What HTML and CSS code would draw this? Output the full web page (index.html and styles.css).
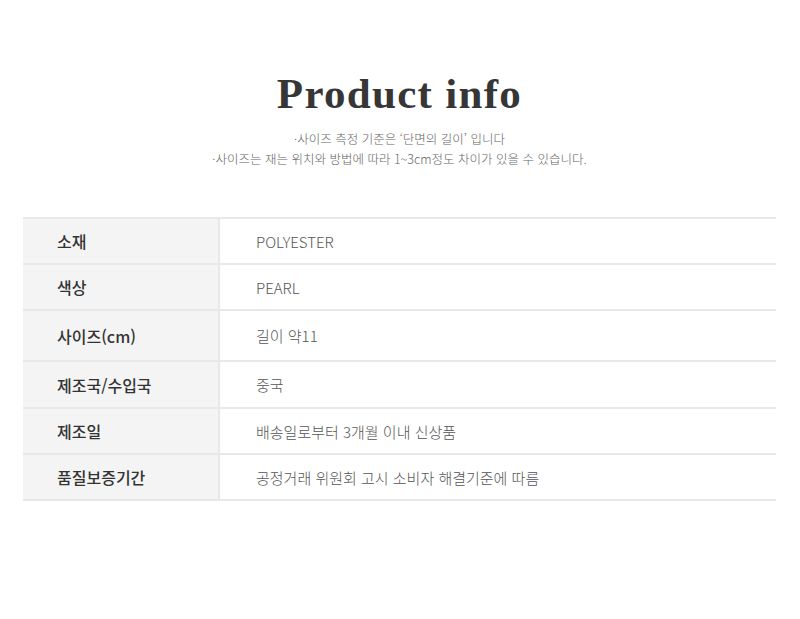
FILE: index.html
```html
<!DOCTYPE html>
<html lang="ko">
<head>
<meta charset="utf-8">
<title>Product info</title>
<link rel="stylesheet" href="styles.css">
</head>
<body>
<div class="page">
  <h1 class="title">Product info</h1>
  <div class="notes">
    <p>·사이즈 측정 기준은 ‘단면의 길이’ 입니다</p>
    <p>·사이즈는 재는 위치와 방법에 따라 1~3cm정도 차이가 있을 수 있습니다.</p>
  </div>
  <div class="table">
    <div class="row r1"><div class="label">소재</div><div class="value">POLYESTER</div></div>
    <div class="row r2"><div class="label">색상</div><div class="value">PEARL</div></div>
    <div class="row r3"><div class="label">사이즈(cm)</div><div class="value">길이 약11</div></div>
    <div class="row r4"><div class="label">제조국/수입국</div><div class="value">중국</div></div>
    <div class="row r5"><div class="label">제조일</div><div class="value">배송일로부터 3개월 이내 신상품</div></div>
    <div class="row r6"><div class="label">품질보증기간</div><div class="value">공정거래 위원회 고시 소비자 해결기준에 따름</div></div>
  </div>
</div>
</body>
</html>
```

FILE: styles.css
```css
* { box-sizing: border-box; }
html, body { margin: 0; padding: 0; background: #fff; }
body { font-family: "Noto Sans CJK KR", "Noto Sans", sans-serif; color: #333; }
.page { padding: 64px 24px 0 23px; }
.title {
  margin: 0;
  text-align: center;
  font-family: "Liberation Serif", serif;
  font-weight: bold;
  font-size: 43px;
  line-height: 60px;
  letter-spacing: 1.3px;
  color: #363636;
}
.notes { margin-top: 5px; text-align: center; font-size: 12.5px; line-height: 20px; color: #666; font-weight: 300; }
.notes p { margin: 0; }
.table { margin-top: 48px; border-top: 2px solid #e8e8e8; }
.row { display: flex; border-bottom: 2px solid #e8e8e8; height: 46px; }
.r3 { height: 51px; }
.r4 { height: 47px; }
.label {
  width: 197px;
  flex: none;
  background: #f4f4f4;
  border-right: 2px solid #e8e8e8;
  display: flex; align-items: center;
  padding-left: 34px;
  font-size: 16px;
  font-weight: 500;
  color: #333;
}
.value {
  flex: 1;
  display: flex; align-items: center;
  padding-left: 36px;
  font-size: 15px;
  font-weight: 300;
  color: #555;
}
```
